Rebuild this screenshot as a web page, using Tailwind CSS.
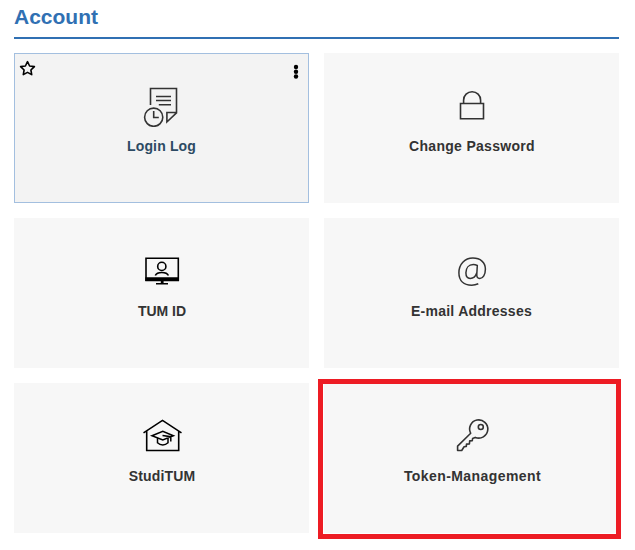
<!DOCTYPE html>
<html lang="en">
<head>
<meta charset="utf-8">
<title>Account</title>
<script src="https://cdn.jsdelivr.net/npm/@tailwindcss/browser@4"></script>
</head>
<body class="bg-white font-['Liberation_Sans',Arial,sans-serif] text-[#333] h-[550px] overflow-hidden">
<main class="pl-[14px] w-[619px]">
  <h1 class="h-[39px] pt-[4px] border-b-2 border-[#3070b3] text-[#3070b3] text-[21px] leading-[26px] font-bold">Account</h1>
  <div class="mt-[14px] grid grid-cols-2 gap-[15px] text-[14px] leading-[16px] font-bold tracking-[0.3px]">
    <a class="relative h-[150px] pt-[34px] flex flex-col items-center bg-[#f3f3f3] inset-ring inset-ring-[#a3bfdf] text-[#2c4a63]">
      <svg class="absolute left-[5px] top-[7px]" width="17" height="17" viewBox="19 60 17 17" fill="none" stroke="#000" stroke-width="1.6" stroke-linejoin="round"><path d="M27.5 61.6l2.1 4.4 4.8.6-3.5 3.4.8 4.6-4.2-2.2-4.2 2.2.8-4.6-3.5-3.4 4.8-.6z"/></svg>
      <svg class="absolute left-[279px] top-[11px]" width="6" height="16" viewBox="293 64 6 16" fill="#000"><circle cx="296" cy="67" r="2.2"/><circle cx="296" cy="71.8" r="2.2"/><circle cx="296" cy="76.5" r="2.2"/></svg>
      <svg width="39" height="40" viewBox="142 87 39 40" fill="none" stroke="#333" stroke-width="1.6"><path d="M150.5 105V88.5h26v24.3l-9.6 9.2v-9.5h9.6M156 96.5h15M156 100.5h15M158.8 104.7H171M153.7 111v6.5h5.1"/><circle cx="153.7" cy="117.2" r="9.1"/></svg>
      <span class="mt-[11px] tracking-[0.15px]">Login Log</span>
    </a>
    <a class="h-[150px] pt-[34px] flex flex-col items-center bg-[#f7f7f7]">
      <svg width="39" height="40" viewBox="452 87 39 40" fill="none" stroke="#333" stroke-width="1.6"><path d="M460.5 103.5h23v15.3h-23zM463.6 103.5v-3.3a8.5 8.5 0 0 1 17 0v3.3"/></svg>
      <span class="mt-[11px] pl-px">Change Password</span>
    </a>
    <a class="h-[150px] pt-[34px] flex flex-col items-center bg-[#f7f7f7]">
      <svg width="39" height="40" viewBox="142 252 39 40" fill="none" stroke="#000" stroke-width="1.6"><path d="M146 258.2h32.3v22H146z"/><path d="M145.3 277.2h33.7v4h-33.7zM160.8 281h2.8v2.5h-2.8zM156 282.9h12v1.5h-12z" fill="#000" stroke="none"/><circle cx="161.8" cy="266.4" r="4.1"/><path d="M155.3 275.5c1-2.3 3-3 6.5-3s5.6.7 6.6 3"/></svg>
      <span class="mt-[11px] tracking-[0px] pl-px">TUM ID</span>
    </a>
    <a class="h-[150px] pt-[34px] flex flex-col items-center bg-[#f7f7f7]">
      <svg width="39" height="40" viewBox="452 252 39 40" fill="none" stroke="#333" stroke-width="1.5"><path d="M478.3 283.8c-2 .9-4.2 1.4-6.6 1.4-7.9 0-12.8-4.5-12.8-12.4 0-8.6 5.8-14.7 14-14.7 7.5 0 12.5 4.3 12.5 10.9 0 5.6-2.4 9.4-5.6 9.4-2.3 0-3.2-1.5-3-4.2l.5-8.7c-1.4-.6-2.8-.9-4-.9-4.6 0-7.4 3.4-7.4 8.2 0 3.6 1.5 5.6 4.3 5.6 3.2 0 5.4-2 6.5-5.4"/></svg>
      <span class="mt-[11px] tracking-[0.25px]">E-mail Addresses</span>
    </a>
    <a class="h-[150px] pt-[34px] flex flex-col items-center bg-[#f7f7f7]">
      <svg width="41" height="40" viewBox="141 417 41 40" fill="none" stroke="#000" stroke-width="1.6"><path d="M143.5 432.8l19-12.4 19 12.4M146.7 430.8v19.7h32v-19.7"/><path d="M152 435.7l10.8-4.3 10.6 4.3-10.6 4.2zM157.5 438v4.8c3 2.8 7.5 2.8 10.5 0V438M162.5 435.5l8.3 1.2v4.8" stroke-width="1.5"/></svg>
      <span class="mt-[11px] tracking-[0.15px] pl-px">StudiTUM</span>
    </a>
    <a class="relative h-[150px] pt-[34px] flex flex-col items-center bg-[#f7f7f7]">
      <svg width="39" height="40" viewBox="452 417 39 40" fill="none" stroke="#333" stroke-width="1.6" stroke-linejoin="round"><path d="M470.7 433.3a9.1 9.1 0 1 1 4.5 4.1l-2.6 1.1-.3 2.2-2.6.2-.3 3-2.9.2-.2 2.3-2.2.3-2.4 3.8h-4.1v-4.4z"/><circle cx="480.8" cy="427" r="2.5"/></svg>
      <span class="mt-[11px] tracking-[0.42px] pl-[2px]">Token-Management</span>
      <div class="absolute -left-[6px] -top-[4px] w-[303px] h-[160px] border-5 border-[#ed1c24]"></div>
    </a>
  </div>
</main>
</body>
</html>
